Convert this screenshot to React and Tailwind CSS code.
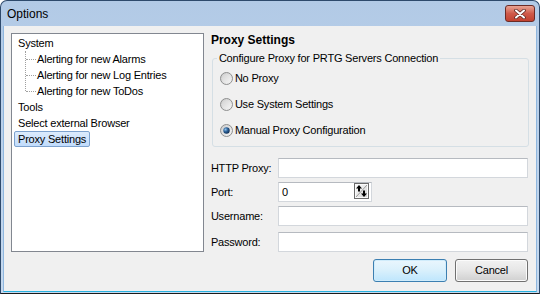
import React from 'react';

const font = { fontFamily: '"Liberation Sans", Arial, sans-serif' };

function Radio({ checked, label }) {
  return (
    <div className="flex h-[16px] items-center">
      <svg width="13" height="13" viewBox="0 0 13 13" className="shrink-0">
        <defs>
          <linearGradient id="rg-out" x1="0" y1="0" x2="1" y2="1">
            <stop offset="0" stopColor="#c9c9c9" />
            <stop offset="1" stopColor="#f7f7f7" />
          </linearGradient>
          <linearGradient id="rg-in" x1="0" y1="0" x2="1" y2="1">
            <stop offset="0" stopColor="#d4d4d4" />
            <stop offset="1" stopColor="#f4f4f4" />
          </linearGradient>
          <radialGradient id="rg-dot" cx="0.35" cy="0.35" r="0.7">
            <stop offset="0" stopColor="#8fc1ea" />
            <stop offset="0.5" stopColor="#2a5f96" />
            <stop offset="1" stopColor="#102d52" />
          </radialGradient>
        </defs>
        <circle cx="6.5" cy="6.5" r="6" fill="url(#rg-out)" stroke="#8e8f8f" strokeWidth="1" />
        <circle cx="6.5" cy="6.5" r="4.3" fill="url(#rg-in)" />
        {checked && <circle cx="6.5" cy="6.5" r="3.2" fill="url(#rg-dot)" />}
      </svg>
      <span className="ml-[2px]">{label}</span>
    </div>
  );
}

function TextBox({ w, value }) {
  return (
    <div className={`${w} h-[20px] border border-[#d3d7dc] border-t-[#b6bac0] bg-white pl-[3px] flex items-center`}>
      {value}
    </div>
  );
}

function SpinGlyph() {
  return (
    <svg width="15" height="16" viewBox="0 0 15 16">
      <defs>
        <linearGradient id="sp" x1="0" y1="0" x2="1" y2="1">
          <stop offset="0" stopColor="#ffffff" />
          <stop offset="1" stopColor="#cfcfcf" />
        </linearGradient>
      </defs>
      <rect x="0.5" y="0.5" width="14" height="15" fill="url(#sp)" stroke="#6b6b6b" />
      <rect x="1.5" y="1.5" width="12" height="13" fill="none" stroke="#fafafa" />
      <line x1="2" y1="14" x2="13" y2="2" stroke="#9a9a9a" />
      <path d="M5 2 L8 5.5 L6 5.5 L6 8.5 L4 8.5 L4 5.5 L2 5.5 Z" fill="#000" />
      <path d="M10 14 L13 10.5 L11 10.5 L11 7.5 L9 7.5 L9 10.5 L7 10.5 Z" fill="#000" />
    </svg>
  );
}

function TreeChild({ label }) {
  return (
    <div className="flex h-[16px] items-center">
      <div className="w-[10px] border-t border-dotted border-[#a0a0a0]" />
      <span className="ml-[1px]">{label}</span>
    </div>
  );
}

export default function App() {
  return (
    <div className="w-[540px] h-[294px] text-[11px] tracking-[-0.2px] text-black overflow-hidden" style={font}>
      <div className="w-full h-full flex flex-col rounded-t-[7px] border border-[#2e4a6c] border-b-[#1a1a1a] bg-gradient-to-b from-[#b2cae6] to-[#c5d9ef]">
        <div className="h-[25px] flex items-start px-[6px] shrink-0">
          <span className="text-[12px] tracking-normal mt-[6px] leading-[14px]">Options</span>
          <button className="ml-auto mt-[4px] -mr-[2px] w-[30px] h-[17px] rounded-[3px] border border-[#6b2b26] bg-gradient-to-b from-[#e8a394] via-[#cf5a4a] to-[#c2412f] flex items-center justify-center">
            <svg width="12" height="10" viewBox="0 0 12 10">
              <path d="M2 1.5 L10 8.5 M10 1.5 L2 8.5" stroke="#5a2a25" strokeWidth="3.6" strokeLinecap="round" />
              <path d="M2 1.5 L10 8.5 M10 1.5 L2 8.5" stroke="#ffffff" strokeWidth="2" strokeLinecap="round" />
            </svg>
          </button>
        </div>
        <div className="flex-1 mx-[2px] mb-[1px] bg-[#f0f0f0] border-x border-b border-x-[#8fb7df] border-b-[#28b2e0] flex flex-col pt-[7px] pl-[7px] pr-[7px] pb-[8px]">
          <div className="flex">
            <div className="w-[194px] h-[219px] bg-white border border-[#828790] pt-[1px] pl-[2px]">
              <div className="flex h-[16px] items-center pl-[4px]">System</div>
              <div className="ml-[11px] border-l border-dotted border-[#a0a0a0] h-[40px] overflow-visible">
                <TreeChild label="Alerting for new Alarms" />
                <TreeChild label="Alerting for new Log Entries" />
                <TreeChild label="Alerting for new ToDos" />
              </div>
              <div className="h-[8px]" />
              <div className="flex h-[16px] items-center pl-[4px]">Tools</div>
              <div className="flex h-[16px] items-center pl-[4px]">Select external Browser</div>
              <div className="flex h-[16px] items-center">
                <span className="h-[16px] px-[3px] flex items-center rounded-[2px] border border-[#7da2ce] bg-gradient-to-b from-[#dcebfc] to-[#c1dcfc]">
                  Proxy Settings
                </span>
              </div>
            </div>
            <div className="ml-[7px] w-[320px] flex flex-col">
              <div className="font-bold text-[12px] tracking-normal leading-[14px]">Proxy Settings</div>
              <fieldset className="mt-[4px] ml-px border border-[#d5dfe5] rounded-[3px] pl-[7px] pb-[8px]">
                <legend className="-ml-[3px] px-[2px] leading-[14px]">Configure Proxy for PRTG Servers Connection</legend>
                <div className="flex flex-col gap-[10px] pt-[5px]">
                  <Radio label="No Proxy" />
                  <Radio label="Use System Settings" />
                  <Radio checked label="Manual Proxy Configuration" />
                </div>
              </fieldset>
              <div className="flex items-center mt-[11px]">
                <span className="w-[67px]">HTTP Proxy:</span>
                <TextBox w="w-[250px]" />
              </div>
              <div className="flex items-center mt-[4px]">
                <span className="w-[67px]">Port:</span>
                <div className="relative">
                  <TextBox w="w-[94px]" value="0" />
                  <div className="absolute right-[3px] top-[1px]">
                    <SpinGlyph />
                  </div>
                </div>
              </div>
              <div className="flex items-center mt-[4px]">
                <span className="w-[67px]">Username:</span>
                <TextBox w="w-[250px]" />
              </div>
              <div className="flex items-center mt-[6px]">
                <span className="w-[67px]">Password:</span>
                <TextBox w="w-[250px]" />
              </div>
            </div>
          </div>
          <div className="flex justify-end gap-[8px] mt-[7px] pr-[1px]">
            <button className="w-[74px] h-[23px] rounded-[3px] border border-[#3c7fb1] bg-gradient-to-b from-[#eaf6fd] via-[#d9f0fc] to-[#bee6fd] shadow-[inset_0_0_0_1px_#d0ecfb]">
              OK
            </button>
            <button className="w-[73px] h-[23px] rounded-[3px] border border-[#707070] bg-gradient-to-b from-[#f2f2f2] via-[#e6e6e6] to-[#d0d0d0] shadow-[inset_0_0_0_1px_#fbfbfb]">
              Cancel
            </button>
          </div>
        </div>
      </div>
    </div>
  );
}
